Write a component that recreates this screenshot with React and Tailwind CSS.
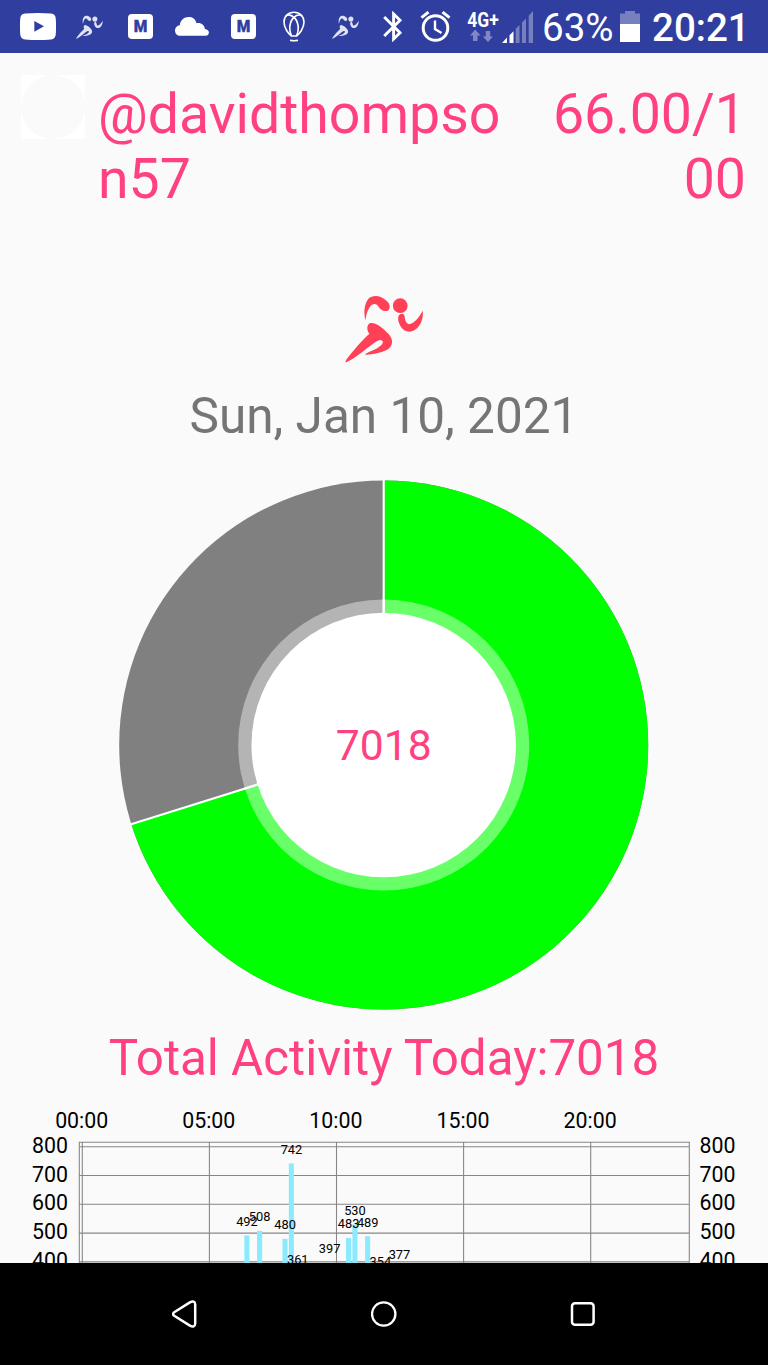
const bars = [
  { hour: 6.5, value: 492 },
  { hour: 7, value: 508 },
  { hour: 8, value: 480 },
  { hour: 8.25, value: 742 },
  { hour: 8.5, value: 361 },
  { hour: 9.75, value: 397 },
  { hour: 10.5, value: 483 },
  { hour: 10.75, value: 530 },
  { hour: 11.25, value: 489 },
  { hour: 11.75, value: 354 },
  { hour: 12.5, value: 377 },
]

const hours = [
  { hour: 0, label: '00:00' },
  { hour: 5, label: '05:00' },
  { hour: 10, label: '10:00' },
  { hour: 15, label: '15:00' },
  { hour: 20, label: '20:00' },
]

const levels = [800, 700, 600, 500, 400]

const xOf = (hour) => 82 + hour * 25.42
const yOf = (value) => 46.7 + (800 - value) * 0.288

const Runner = ({ className }) => (
  <svg viewBox="44 42 236 206" className={className} fill="currentColor" preserveAspectRatio="none">
    <circle cx="209" cy="77" r="22" />
    <path d="M105 121C99 95 102 70 114 56C125 44 150 45 164 59C178 67 182 84 172 92C160 96 148 88 143 78C137 69 125 70 118 81C110 93 107 106 105 121Z" />
    <path d="M204 108C208 99 220 98 222 108C223 120 226 130 235 132C250 131 265 113 276 92C280 115 268 142 250 151C235 159 218 152 210 138C203 127 201 117 204 108Z" />
    <path d="M118 129C135 124 160 146 175 162C190 180 188 200 165 211C145 220 120 224 104 223C108 215 130 212 145 200C158 192 162 181 150 179C132 180 95 222 48 246C44 246 45 243 48 238C70 210 95 180 117 161C108 150 109 134 118 129Z" />
  </svg>
)

const Medium = ({ className }) => (
  <div className={`flex h-[25px] w-[25px] shrink-0 items-center justify-center rounded-[4px] bg-white text-[#303f9f] ${className}`}>
    <svg className="h-[25px] w-[25px]" viewBox="0 0 25 25">
      <text x="5.7" y="18.4" textLength="13.6" lengthAdjust="spacingAndGlyphs" fill="currentColor" stroke="currentColor" strokeWidth="0.4" fontFamily="Roboto, sans-serif" fontSize="17" fontWeight="900">M</text>
    </svg>
  </div>
)

const StatusBar = () => (
  <div className="flex h-[53px] shrink-0 items-center bg-[#303f9f] pl-5 text-white">
    <svg className="h-[27px] w-9 shrink-0" viewBox="0 0 36 27">
      <path fill="#fff" d="M5 .6Q18-.4 31 .6Q35.6 1 35.8 6Q36.3 13.5 35.8 21Q35.6 26 31 26.4Q18 27.4 5 26.4Q.4 26 .2 21Q-.3 13.5 .2 6Q.4 1 5 .6Z" />
      <path fill="#303f9f" d="M14.3 8L24 13.3L14.3 18.7Z" />
    </svg>
    <Runner className="ml-5 h-6 w-[27px] shrink-0 text-[#dfe2f1]" />
    <Medium className="ml-[25px]" />
    <svg className="ml-[22px] h-[19px] w-[34px] shrink-0" viewBox="0 0 34 19">
      <path fill="#fff" d="M5.5 18.8C2 18.8 0 16.500 0 13.5C0 10.7 2 8.5 4.8 8.2C5.3 3.5 9 .1 13.7 .1C17.5 .1 20.5 2 21.5 6.2C26 5.2 29.5 8 29.9 12C32.5 12.2 33.9 13.7 33.9 15.5C33.9 17.5 32.5 18.8 30.5 18.8Z" />
    </svg>
    <Medium className="ml-[22px]" />
    <svg className="ml-[27px] h-[31px] w-[22px] shrink-0" viewBox="0 0 22 31" fill="none" stroke="#fff" strokeWidth="1.6">
      <path d="M11 1.2C5 1.2 1 5.5 1 11C1 17 5.500 23 8.5 25H13.5C16.5 23 21 17 21 11C21 5.5 17 1.2 11 1.2Z" />
      <path d="M2.5 5.5C5 3 8.5 4 11 6.5C13.5 4 17 3 19.5 5.5M11 6.5C7 9.5 5.2 18 8.5 25M11 6.5C15 9.5 16.8 18 13.5 25M7 29.2Q11 30.2 15 29.2" />
    </svg>
    <Runner className="ml-[27px] h-6 w-[27px] shrink-0 text-[#dfe2f1]" />
    <svg className="ml-6 h-[31px] w-5 shrink-0" viewBox="0 0 20 31" fill="none" stroke="#fff" strokeWidth="2.9">
      <path d="M1.2 6L17 21.8L10.6 28V3L17 9.2L1.2 25" />
    </svg>
    <svg className="ml-[17px] h-[31px] w-[31px] shrink-0" viewBox="0 0 31 31" fill="none" stroke="#fff" strokeWidth="3">
      <circle cx="15.5" cy="17" r="12.3" />
      <path strokeWidth="2.4" d="M15 9.5V18L21.5 22" />
      <path d="M1.5 6.7L8.5 1.1M22.5 1.1L29.5 6.7" />
    </svg>
    <svg className="ml-4 h-[31px] w-8 shrink-0 overflow-visible" viewBox="0 0 32 31">
      <text x="0.3" y="15.8" textLength="31.500" lengthAdjust="spacingAndGlyphs" fill="#fff" fontFamily="Roboto, sans-serif" fontSize="20" fontWeight="700">4G+</text>
      <path fill="#8088c4" d="M8.2 18.5L13.5 24.5H10.5V30H6V24.5H3ZM21 31L26 25.5H23.2V20H18.8V25.500H15.8Z" />
    </svg>
    <svg className="ml-[3px] h-8 w-[31px] shrink-0" viewBox="0 0 31 32">
      <path fill="#fff" d="M0 32L5 26.5V32ZM7.5 24.2L11.5 20.2V32H7.5Z" />
      <path fill="#7680be" d="M13.7 17.8L17.5 14V32H13.7ZM20 11.5L24 7.5V32H20ZM26.7 4.7L31 0V32H26.7Z" />
    </svg>
    <span className="ml-[9px] w-[73px] pt-[3px] text-[38.5px] leading-none whitespace-nowrap">63%</span>
    <svg className="ml-[5px] h-[31px] w-5 shrink-0" viewBox="0 0 20 31">
      <path fill="#7680be" d="M0 2.5H5V0H15V2.5H20V13H0Z" />
      <path fill="#fff" d="M0 13H20V31H0Z" />
    </svg>
    <span className="ml-3 pt-[3px] text-[38.5px] leading-none font-medium whitespace-nowrap">20:21</span>
  </div>
)

const Donut = () => (
  <svg className="mx-auto block h-[530px] w-[530px] shrink-0" viewBox="-264.7 -265 530 530">
    <circle r="264.5" fill="#808080" />
    <path d="M0 0V-264.5A264.5 264.5 0 1 1 -252.4 79.1Z" fill="#00ff00" />
    <path d="M0 0V-265M0 0L-253.4 79.4" stroke="#fff" strokeWidth="2.13" />
    <circle r="145.5" fill="#fff" fillOpacity="0.41" />
    <path d="M0 0V-146M0 0L-139.5 43.7" stroke="#fff" strokeWidth="2.13" />
    <circle r="132.25" fill="#fff" />
    <text y="15" textAnchor="middle" fontSize="42.67" fill="#ff4081" fontFamily="Roboto, sans-serif">7018</text>
  </svg>
)

const ActivityChart = () => (
  <svg className="block h-[163px] w-[768px] shrink-0" viewBox="0 0 768 163" fontFamily="Roboto, sans-serif">
    <g stroke="#868686" strokeWidth="1.07" fill="none">
      <path d="M79.3 163V42.3H689.3V163" />
      {hours.map((h) => (
        <path key={h.hour} d={`M${xOf(h.hour) + 0.3} 42V163`} />
      ))}
      {levels.map((v) => (
        <path key={v} d={`M79 ${yOf(v)}H689`} />
      ))}
    </g>
    {bars.map((b) => (
      <rect key={b.hour} x={xOf(b.hour) - 2.9} y={yOf(b.value)} width="5.1" height="100" fill="#8ceaff" />
    ))}
    <g fontSize="12.8" textAnchor="middle">
      {bars.map((b) => (
        <text key={b.hour} x={xOf(b.hour) - 0.3} y={yOf(b.value) - 9.6}>{b.value}</text>
      ))}
    </g>
    <g fontSize="21.33">
      {hours.map((h) => (
        <text key={h.hour} x={xOf(h.hour) - 0.3} y="28.3" textAnchor="middle">{h.label}</text>
      ))}
      {levels.map((v) => (
        <text key={v} x="68" y={yOf(v) + 6} textAnchor="end">{v}</text>
      ))}
      {levels.map((v) => (
        <text key={v} x="699.5" y={yOf(v) + 6}>{v}</text>
      ))}
    </g>
  </svg>
)

const NavBar = () => (
  <div className="flex h-[102px] shrink-0 items-center justify-between bg-black px-[172px]">
    <svg className="h-7 w-[26px]" viewBox="0 0 26 28" fill="none" stroke="#fff" strokeWidth="2.5" strokeLinejoin="round">
      <path d="M2.2 12.3L17.500 2.6Q23 -.2 23.2 4.5V23.5Q23 28.200 17.5 25.4L2.2 15.7Q0 14 2.2 12.3Z" />
    </svg>
    <svg className="h-[26px] w-[26px]" viewBox="0 0 26 26" fill="none" stroke="#fff" strokeWidth="2.3">
      <circle cx="12.7" cy="13" r="11.7" />
    </svg>
    <svg className="h-6 w-[26px]" viewBox="0 0 26 24" fill="none" stroke="#fff" strokeWidth="2.5">
      <rect x="2" y="1.3" width="21.6" height="21.4" rx="3" />
    </svg>
  </div>
)

const App = () => {
  return (
    <div className="flex h-[1365px] w-[768px] flex-col overflow-hidden bg-[#fafafa] font-['Roboto',sans-serif]">
      <StatusBar />
      <div className="flex h-[241px] shrink-0 items-start pt-[21px] pr-[22px] pl-[21px] text-[55.4px] leading-[64.5px] text-[#ff4081]">
        <div className="mt-px h-16 w-16 shrink-0 bg-white">
          <div className="h-16 w-16 rounded-full bg-[#fafafa]"></div>
        </div>
        <div className="ml-[13px] w-[415px] pt-[9px] break-all">@davidthompson57</div>
        <div className="ml-auto w-[205px] pt-[9px] text-right break-all">66.00/100</div>
      </div>
      <Runner className="mx-auto h-[69px] w-[79px] shrink-0 text-[#ff4057]" />
      <div className="mt-[23px] h-[60px] shrink-0 text-center text-[49.5px] leading-[60px] text-[#757575]">Sun, Jan 10, 2021</div>
      <div className="mt-[34px] shrink-0">
        <Donut />
      </div>
      <div className="mt-[18px] h-[60px] shrink-0 text-center text-[49.3px] leading-[60px] text-[#ff4081]">Total Activity Today:7018</div>
      <div className="mt-3 h-[163px] shrink-0 overflow-hidden">
        <ActivityChart />
      </div>
      <NavBar />
    </div>
  )
}

export default App
